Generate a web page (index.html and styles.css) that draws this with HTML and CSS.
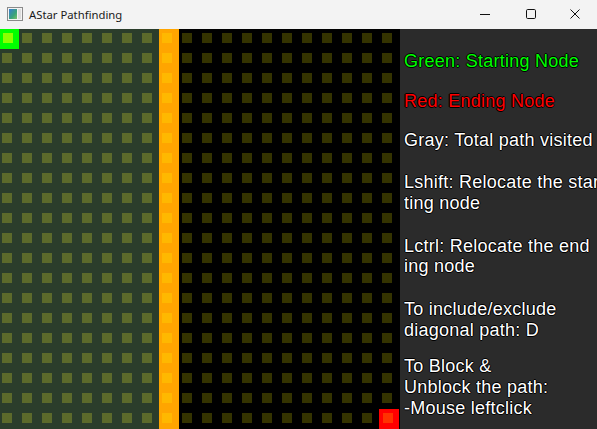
FILE: index.html
```html
<!DOCTYPE html>
<html>
<head>
<meta charset="utf-8">
<title>AStar Pathfinding</title>
<link rel="stylesheet" href="styles.css">
</head>
<body>
<div class="window">
  <header class="titlebar">
    <svg class="app-icon" width="16" height="14" viewBox="0 0 16 14">
      <defs>
        <linearGradient id="ig" x1="0" y1="0" x2="1" y2="1">
          <stop offset="0" stop-color="#3a7bd5"/>
          <stop offset="0.6" stop-color="#3aa37a"/>
          <stop offset="1" stop-color="#7cc26a"/>
        </linearGradient>
      </defs>
      <rect x="0.5" y="0.5" width="15" height="13" fill="#f4f4f4" stroke="#8a8a8a"/>
      <rect x="2" y="2" width="8" height="10" fill="url(#ig)"/>
      <rect x="11" y="2" width="3" height="10" fill="#dcdcdc"/>
    </svg>
    <span class="title">AStar Pathfinding</span>
    <div class="controls">
      <div class="ctl ctl-min">
        <svg width="10" height="10" viewBox="0 0 10 10"><path d="M0 5.5H10" stroke="#111" stroke-width="1"/></svg>
      </div>
      <div class="ctl ctl-max">
        <svg width="10" height="10" viewBox="0 0 10 10"><rect x="0.5" y="0.5" width="9" height="9" rx="1.2" fill="none" stroke="#111" stroke-width="1"/></svg>
      </div>
      <div class="ctl ctl-close">
        <svg width="10" height="10" viewBox="0 0 10 10"><path d="M0.5 0.5L9.5 9.5M9.5 0.5L0.5 9.5" stroke="#111" stroke-width="1"/></svg>
      </div>
    </div>
  </header>
  <main class="client">
    <section class="board">
      <div class="grid">
        <div class="zone zone-visited"></div>
        <div class="zone zone-wall"></div>
        <div class="zone zone-open"></div>
        <div class="cell cell-start"><span class="dot"></span></div>
        <div class="cell cell-end"><span class="dot"></span></div>
      </div>
    </section>
    <aside class="legend">
      <p class="item green">Green: Starting Node</p>
      <p class="item red gap-2">Red: Ending Node</p>
      <p class="item gap-3">Gray: Total path visited</p>
      <p class="item gap-4">Lshift: Relocate the star<br>ting node</p>
      <p class="item gap-5">Lctrl: Relocate the end<br>ing node</p>
      <p class="item gap-6">To include/exclude<br>diagonal path: D</p>
      <p class="item gap-7">To Block &amp;<br>Unblock the path:<br>-Mouse leftclick</p>
    </aside>
  </main>
</div>
</body>
</html>
```

FILE: styles.css
```css
* { box-sizing: border-box; }
html, body {
  margin: 0;
  padding: 0;
  width: 597px;
  height: 429px;
  overflow: hidden;
  background: #000;
}
.window {
  width: 597px;
  height: 429px;
  display: flex;
  flex-direction: column;
}
.titlebar {
  height: 29px;
  flex: none;
  background: #f3f3f3;
  display: flex;
  align-items: center;
  font-family: "Noto Sans", "Open Sans", sans-serif;
  font-size: 11.3px;
  color: #1a1a1a;
}
.app-icon {
  margin-left: 7px;
  margin-top: -2px;
}
.title {
  margin-left: 6px;
  margin-top: -1px;
}
.controls {
  margin-left: auto;
  display: flex;
  height: 100%;
}
.ctl {
  height: 100%;
  display: flex;
  align-items: center;
  justify-content: center;
  padding-bottom: 2px;
}
.ctl-min { width: 46px; }
.ctl-max { width: 45px; }
.ctl-close { width: 44px; }

.client {
  flex: 1;
  display: flex;
}
.board {
  width: 400px;
  height: 400px;
  background: #000;
  overflow: hidden;
  flex: none;
}
.grid {
  margin-left: -1px;
  display: grid;
  grid-template-columns: repeat(20, 20px);
  grid-template-rows: repeat(20, 20px);
}
.zone {
  grid-row: 1 / 21;
  background-size: 20px 20px;
}
.zone-visited {
  grid-column: 1 / 9;
  --bg: #2b3d2b;
  --sq: #5c6a2b;
}
.zone-wall {
  grid-column: 9 / 10;
  --bg: #ffa500;
  --sq: #ffb800;
}
.zone-open {
  grid-column: 10 / 21;
  --bg: #000000;
  --sq: #343300;
}
.zone {
  background-color: var(--bg);
  background-image:
    linear-gradient(to bottom, var(--bg) 4px, transparent 4px, transparent 14px, var(--bg) 14px),
    linear-gradient(to right, var(--bg) 3px, var(--sq) 3px, var(--sq) 13px, var(--bg) 13px);
}
.cell {
  position: relative;
  z-index: 1;
  padding: 4px 0 0 4px;
}
.cell .dot {
  display: block;
  width: 10px;
  height: 10px;
}
.cell-start {
  grid-column: 1;
  grid-row: 1;
  background: #00ff00;
}
.cell-start .dot { background: #8cff00; }
.cell-end {
  grid-column: 20;
  grid-row: 20;
  background: #ff0000;
}
.cell-end .dot { background: #ff3300; }

.legend {
  flex: 1;
  background: #2b2b2b;
  overflow: hidden;
  padding: 22px 0 0 4px;
  font-family: "Liberation Sans", Arial, sans-serif;
  font-size: 18px;
  letter-spacing: 0.25px;
  line-height: 20.7px;
  color: #ffffff;
  white-space: nowrap;
}
.item {
  margin: 0;
  text-shadow: 1px 0 #000, -1px 0 #000, 0 1px #000, 0 -1px #000;
}
.green { color: #00ff00; }
.red { color: #ff0000; }
.gap-2 { margin-top: 19px; }
.gap-3 { margin-top: 18.5px; }
.gap-4 { margin-top: 21.5px; }
.gap-5 { margin-top: 22px; }
.gap-6 { margin-top: 22px; }
.gap-7 { margin-top: 16px; }
```
